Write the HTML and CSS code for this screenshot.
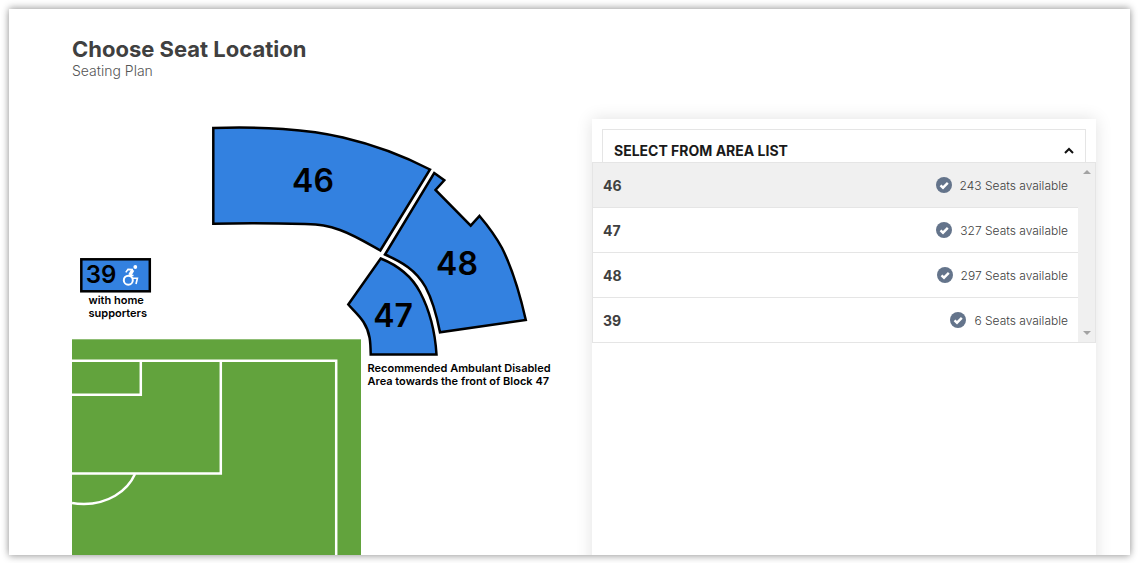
FILE: index.html
```html
<!DOCTYPE html>
<html lang="en">
<head>
    <meta charset="UTF-8">
    <meta name="viewport" content="width=device-width, initial-scale=1.0">
    <title>Choose Seat Location</title>
    <link rel="stylesheet" href="styles.css">
</head>
<body>

    <main class="page">
        <header class="page-header">
            <h1>Choose Seat Location</h1>
            <p>Seating Plan</p>
        </header>

        <div class="content">
            <!-- Seating plan -->
            <svg class="plan" viewBox="72 119 520 470">
                <rect class="grass" x="72" y="339.3" width="289" height="300"/>
                <g class="lines">
                    <path d="M72 360.8H336.2V600"/>
                    <path d="M72 394.7H140.8V360.8"/>
                    <path d="M72 473.4H220.8V360.8"/>
                    <path d="M135 474C127 492 107 504 84 504Q77 504 72 503"/>
                </g>

                <a href="#block-46">
                    <path class="block" d="M213.3 128C236 127.200 260 127.400 283 129C304 130.500 324 133 343 137.500C375 145 400 154 430 169.500L380.300 250.500C367 243 354 235 340 230C328 225.500 320 224.500 305 224C275 223.300 245 223 213.300 223.800Z"/>
                    <text class="number" x="313" y="192">46</text>
                </a>
                <a href="#block-48">
                    <path class="block" d="M434.200 173L444.300 180.300L435.500 190L470.700 225.700L479.500 216C488 226 496 237 502 248C513 270 519 290 525.800 320L440 332.300C437 317 433 301 425.500 287C416 270 402 262 385 254.500Z"/>
                    <text class="number" x="457" y="275">48</text>
                </a>
                <a href="#block-47">
                    <path class="block" d="M380.700 258.500C397 265 411 275 420 292C430 311 435 330 436.500 354.600H370.700C370.500 343 370.500 333 363.500 322C359 315 353 310 348.300 304.500Z"/>
                    <text class="number" x="393" y="327">47</text>
                </a>
                <a href="#block-39">
                    <rect class="block" x="81.300" y="259.300" width="68.500" height="32"/>
                    <text class="number number-small" x="101" y="283">39</text>
                    <g class="wheelchair">
                        <circle class="head" cx="135.300" cy="267" r="1.900"/>
                        <path class="torso" d="M132.800 270L129.800 275.200"/>
                        <path d="M133 269.600L128 269.400L125.800 272.400"/>
                        <path d="M129.500 275.500H133.500"/>
                        <path d="M133 278.200H137.400L136 284"/>
                        <circle class="wheel" cx="128.300" cy="280.200" r="4.500"/>
                    </g>
                </a>

                <text class="note">
                    <tspan x="88.500" y="304">with home</tspan>
                    <tspan x="88.500" y="317">supporters</tspan>
                </text>
                <text class="note">
                    <tspan x="367.500" y="372">Recommended Ambulant Disabled</tspan>
                    <tspan x="367.500" y="385">Area towards the front of Block 47</tspan>
                </text>
            </svg>

            <!-- Area list -->
            <section class="panel">
                <button type="button" class="select-button" aria-expanded="true" aria-controls="areaList">
                    <span>SELECT FROM AREA LIST</span>
                    <svg class="chevron" viewBox="0 0 10 7"><path d="M1 6L5 2L9 6"/></svg>
                </button>
                <div class="dropdown">
                    <ul class="area-list" id="areaList">
                        <li>
                            <button type="button" class="area active">
                                <strong>46</strong>
                                <svg class="check" viewBox="0 0 16 16"><circle cx="8" cy="8" r="8"/><path d="M4.500 8.300L7 10.700L11.800 5.800"/></svg>
                                <span>243 Seats available</span>
                            </button>
                        </li>
                        <li>
                            <button type="button" class="area">
                                <strong>47</strong>
                                <svg class="check" viewBox="0 0 16 16"><circle cx="8" cy="8" r="8"/><path d="M4.500 8.300L7 10.700L11.800 5.800"/></svg>
                                <span>327 Seats available</span>
                            </button>
                        </li>
                        <li>
                            <button type="button" class="area">
                                <strong>48</strong>
                                <svg class="check" viewBox="0 0 16 16"><circle cx="8" cy="8" r="8"/><path d="M4.500 8.300L7 10.700L11.800 5.800"/></svg>
                                <span>297 Seats available</span>
                            </button>
                        </li>
                        <li>
                            <button type="button" class="area">
                                <strong>39</strong>
                                <svg class="check" viewBox="0 0 16 16"><circle cx="8" cy="8" r="8"/><path d="M4.500 8.300L7 10.700L11.800 5.800"/></svg>
                                <span>6 Seats available</span>
                            </button>
                        </li>
                    </ul>
                    <div class="scrollbar" aria-hidden="true">
                        <svg viewBox="0 0 8 4"><path d="M0 4L4 0L8 4Z"/></svg>
                        <svg viewBox="0 0 8 4"><path d="M0 0L4 4L8 0Z"/></svg>
                    </div>
                </div>
            </section>
        </div>
    </main>

</body>
</html>
```
FILE: styles.css
```css
* {
    box-sizing: border-box;
}

body {
    display: flex;
    height: 100vh;
    margin: 0;
    padding: 9px 8px 8px 9px;
    font-family: Inter, Arial, sans-serif;
    color: #404040;
    background: #fff;
}

.page {
    display: flex;
    flex-direction: column;
    flex: 1;
    gap: 40px;
    padding: 27px 34px 0 63px;
    overflow: hidden;
    background: #fff;
    box-shadow: 0 2px 7px rgba(0, 0, 0, 0.25), 0 -2px 7px rgba(0, 0, 0, 0.25);
}

.page-header h1 {
    margin: 0;
    font-size: 22px;
    line-height: 26px;
    font-weight: 700;
}

.page-header p {
    margin: 0;
    font-size: 14px;
    line-height: 18px;
    font-weight: 300;
    color: #555;
}

.content {
    display: grid;
    grid-template-columns: 520fr 504fr;
    flex: 1;
    margin-top: -1px;
}

/* Seating plan */
.plan {
    display: block;
    width: 100%;
}

.grass {
    fill: #62a33d;
}

.lines {
    fill: none;
    stroke: #fff;
    stroke-width: 2.5;
}

.block {
    fill: #3381e0;
    stroke: #000;
    stroke-width: 2.5;
}

.number {
    font-size: 32px;
    font-weight: 600;
    text-anchor: middle;
}

.number-small {
    font-size: 24px;
}

.note {
    font-size: 11px;
    font-weight: 600;
}

.wheelchair {
    fill: none;
    stroke: #fff;
    stroke-width: 1.6;
}

.wheelchair .head {
    fill: #fff;
    stroke: none;
}

.wheelchair .torso {
    stroke-width: 3.4;
}

.wheelchair .wheel {
    stroke-width: 2;
}

/* Area list */
.panel {
    padding-top: 10px;
    background: #fff;
    box-shadow: 0 0 16px rgba(0, 0, 0, 0.12);
}

button {
    font-family: inherit;
    color: inherit;
    text-align: left;
    cursor: pointer;
}

.select-button {
    display: flex;
    align-items: center;
    justify-content: space-between;
    width: calc(100% - 20px);
    height: 33px;
    margin: 0 10px;
    padding: 9px 11px 0;
    border: 1px solid #e5e5e5;
    border-bottom: none;
    background: #fff;
    color: #1a1a1a;
    font-size: 14px;
    font-weight: 700;
}

.chevron {
    width: 10px;
    height: 7px;
    fill: none;
    stroke: #111;
    stroke-width: 2;
}

.dropdown {
    display: flex;
    border: 1px solid #e5e5e5;
}

.area-list {
    flex: 1;
    margin: 0;
    padding: 0;
    list-style: none;
}

.area-list li + li {
    border-top: 1px solid #e5e5e5;
}

.area {
    display: flex;
    align-items: center;
    width: 100%;
    height: 44px;
    padding: 0 10px;
    border: none;
    background: #fff;
    font-size: 12px;
    font-weight: 300;
}

.area.active {
    background: #f0f0f0;
}

.area strong {
    flex: 1;
    font-size: 14px;
    font-weight: 700;
}

.check {
    width: 16px;
    height: 16px;
    margin-right: 8px;
    fill: #64748b;
}

.check path {
    fill: none;
    stroke: #fff;
    stroke-width: 2.4;
}

.scrollbar {
    display: flex;
    flex-direction: column;
    align-items: center;
    justify-content: space-between;
    width: 17px;
    padding: 7px 0;
    background: #f0f0f0;
}

.scrollbar svg {
    width: 8px;
    height: 4px;
    fill: #a3a3a3;
}
```
